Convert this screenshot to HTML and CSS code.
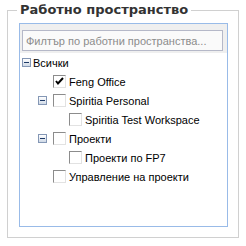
FILE: index.html
```html
<!DOCTYPE html>
<html lang="bg">
<head>
  <meta charset="UTF-8">
  <title>Работно пространство</title>
  <link rel="stylesheet" href="styles.css">
</head>
<body>

  <fieldset class="ws-box">
    <legend>Работно пространство</legend>
    <div class="ws-panel">
      <div class="ws-filter">
        <input type="text" placeholder="Филтър по работни пространства...">
      </div>
      <ul class="ws-tree">
        <li class="node lvl0"><span class="elbow"><span class="toggle"></span></span><span class="label">Всички</span></li>
        <li class="node lvl1"><span class="elbow"></span><span class="check checked">
          <svg width="11" height="11" viewBox="0 0 11 11"><path d="M2 5 L4 7.5 L9 2" fill="none" stroke="#000" stroke-width="2"/></svg>
        </span><span class="label">Feng Office</span></li>
        <li class="node lvl1"><span class="elbow"><span class="toggle"></span></span><span class="check"></span><span class="label">Spiritia Personal</span></li>
        <li class="node lvl2"><span class="elbow"></span><span class="check"></span><span class="label">Spiritia Test Workspace</span></li>
        <li class="node lvl1"><span class="elbow"><span class="toggle"></span></span><span class="check"></span><span class="label">Проекти</span></li>
        <li class="node lvl2"><span class="elbow"></span><span class="check"></span><span class="label">Проекти по FP7</span></li>
        <li class="node lvl1"><span class="elbow"></span><span class="check"></span><span class="label">Управление на проекти</span></li>
      </ul>
    </div>
  </fieldset>

</body>
</html>
```

FILE: styles.css
```css
body {
  margin: 0;
  background: #fff;
  font-family: 'Liberation Sans', Arial, sans-serif;
  color: #000;
}

.ws-box {
  margin: 2px 7px 0 7px;
  padding: 5px 10px 10px 11px;
  border: 1px solid #d0d0d0;
}

.ws-box legend {
  font-family: 'DejaVu Sans', Verdana, sans-serif;
  font-weight: bold;
  font-size: 13px;
  line-height: 16px;
  color: #333;
  padding: 0 3px;
  margin-left: -2px;
}

.ws-panel {
  height: 202px;
  border: 1px solid #99bbe8;
  background: #fff;
}

.ws-filter {
  background: #efefef;
  padding: 6px 0 2px 2px;
}

.ws-filter input {
  display: block;
  box-sizing: border-box;
  width: 201px;
  height: 21px;
  margin: 0;
  padding: 0 3px;
  border: 1px solid #b5b8c8;
  background: #fafafa;
  font-family: 'Liberation Sans', Arial, sans-serif;
  font-size: 11px;
}

.ws-filter input::placeholder {
  color: #8c8c8c;
}

.ws-tree {
  list-style: none;
  margin: 0;
  padding: 0;
}

.node {
  display: flex;
  align-items: center;
  height: 19px;
  font-size: 11px;
}

.lvl0 { padding-left: 1px; }
.lvl1 { padding-left: 17px; }
.lvl2 { padding-left: 33px; }

.elbow {
  width: 16px;
  display: flex;
  align-items: center;
}

.lvl0 .elbow {
  width: 12px;
}

.toggle {
  position: relative;
  box-sizing: border-box;
  width: 9px;
  height: 9px;
  margin-left: 1px;
  border: 1px solid #8497b5;
  background: linear-gradient(#ffffff, #cfd9e6);
}

.toggle::after {
  content: '';
  position: absolute;
  left: 1px;
  top: 3px;
  width: 5px;
  height: 1px;
  background: #1e3a66;
}

.check {
  box-sizing: border-box;
  width: 13px;
  height: 13px;
  margin-right: 3px;
  border: 1px solid;
  border-color: #8c8c8c #e2e2e2 #e2e2e2 #8c8c8c;
  background: #fff;
  display: flex;
  align-items: center;
  justify-content: center;
}

.check svg {
  display: block;
}

.label {
  white-space: nowrap;
}
```
